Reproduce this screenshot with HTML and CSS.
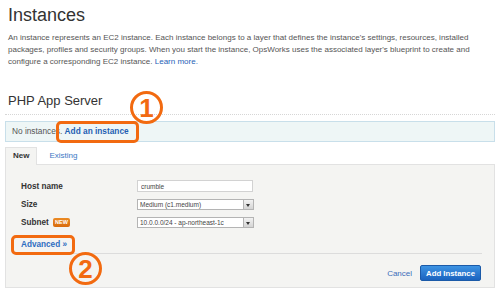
FILE: index.html
```html
<!DOCTYPE html>
<html lang="en">
<head>
  <meta charset="UTF-8" />
  <title>Instances</title>
  <link rel="stylesheet" href="styles.css">
</head>
<body>
  <div class="page">
    <h1>Instances</h1>
    <p class="intro">An instance represents an EC2 instance. Each instance belongs to a layer that defines the instance's settings, resources, installed packages, profiles and security groups. When you start the instance, OpsWorks uses the associated layer's blueprint to create and configure a corresponding EC2 instance. <a href="#">Learn more.</a></p>

    <h2 class="layer-title">PHP App Server</h2>

    <div class="notice">No instances. <a href="#" class="add-link marked">Add an instance</a></div>

    <div class="tabs">
      <span class="tab active">New</span>
      <span class="tab">Existing</span>
    </div>

    <div class="panel">
      <div class="form">
        <div class="row">
          <label>Host name</label>
          <input class="field" type="text" value="crumble">
        </div>
        <div class="row">
          <label>Size</label>
          <div class="select"><span>Medium (c1.medium)</span><span class="arrow"></span></div>
        </div>
        <div class="row">
          <label>Subnet <span class="badge">NEW</span></label>
          <div class="select"><span>10.0.0.0/24 - ap-northeast-1c</span><span class="arrow"></span></div>
        </div>
        <div class="advanced-row">
          <a href="#" class="advanced marked">Advanced &raquo;</a>
        </div>
      </div>
      <div class="actions">
        <a href="#" class="cancel">Cancel</a>
        <button class="btn-primary">Add Instance</button>
      </div>
    </div>

    <!-- callout numbers -->
    <span class="step step-1">1</span>
    <span class="step step-2">2</span>
  </div>
</body>
</html>
```

FILE: styles.css
```css
body {
  margin: 0;
  padding: 0;
  background: #fff;
  font-family: "Liberation Sans", Arial, sans-serif;
  color: #444;
}

a {
  color: #1f62b7;
  text-decoration: none;
}

.page {
  position: relative;
  padding: 0 5px;
}

h1 {
  margin: 0;
  padding: 4px 3px 0;
  font-size: 18px;
  line-height: 22px;
  font-weight: normal;
  color: #333;
}

.intro {
  margin: 6px 0 0;
  padding: 0 3px;
  font-size: 8px;
  line-height: 12px;
  color: #555;
}

.layer-title {
  margin: 25px 0 0;
  padding: 0 3px 5px;
  font-size: 13px;
  line-height: 16px;
  font-weight: normal;
  color: #333;
  border-bottom: 1px dotted #d6d6d6;
}

.notice {
  margin-top: 6px;
  padding: 0 6px;
  height: 19px;
  line-height: 19px;
  font-size: 8.3px;
  color: #555;
  background: #eef6f6;
  border: 1px solid #c8dfea;
}

.add-link {
  font-weight: bold;
  color: #1f5fb3;
}

/* orange annotation frames */
.marked {
  position: relative;
  display: inline-block;
}

.marked::after {
  content: "";
  position: absolute;
  border: 3px solid #f26a10;
  border-radius: 5px;
  pointer-events: none;
}

.add-link::after {
  left: -9px;
  right: -10px;
  top: -1px;
  bottom: -2px;
}

.tabs {
  display: flex;
  margin-top: 5px;
  font-size: 8px;
  line-height: 16px;
}

.tab {
  padding: 0 11px;
  color: #3b78c4;
  border: 1px solid transparent;
  border-bottom: none;
}

.tab.active {
  position: relative;
  z-index: 1;
  padding: 0 7px 1px;
  font-weight: bold;
  color: #333;
  background: #f4f4f2;
  border-color: #e2e2e2;
  margin-bottom: -1px;
}

.panel {
  background: #f4f4f2;
  border: 1px solid #e2e2e2;
  height: 122px;
}

.form {
  margin: 0 12px;
  padding: 12px 0 2px;
  border-bottom: 1px solid #dcdcdc;
}

.row {
  display: flex;
  align-items: center;
  height: 18px;
}

.row label {
  width: 116px;
  padding-left: 3px;
  font-size: 8.2px;
  font-weight: bold;
  color: #333;
}

.badge {
  display: inline-block;
  margin-left: 2px;
  padding: 0 2px;
  height: 9px;
  line-height: 9px;
  font-size: 5.5px;
  color: #fff;
  background: linear-gradient(#eb8a24, #d86a0c);
  border-radius: 2px;
  vertical-align: 1px;
}

.field {
  box-sizing: border-box;
  width: 116px;
  height: 12px;
  margin: 0;
  padding: 0 3px;
  font-family: inherit;
  font-size: 6.5px;
  color: #444;
  background: #fff;
  border: 1px solid #d2d2d2;
  outline: none;
}

.select {
  box-sizing: border-box;
  display: flex;
  align-items: center;
  justify-content: space-between;
  width: 117px;
  height: 11px;
  padding-left: 2px;
  font-size: 6.5px;
  color: #444;
  background: #fff;
  border: 1px solid #b4b4b4;
}

.arrow {
  position: relative;
  width: 9px;
  height: 9px;
  background: linear-gradient(#f2f2f2, #d4d4d4);
  border-left: 1px solid #b4b4b4;
}

.arrow::before {
  content: "";
  position: absolute;
  left: 2px;
  top: 4px;
  border-left: 2.5px solid transparent;
  border-right: 2.5px solid transparent;
  border-top: 3px solid #333;
}

.advanced-row {
  height: 18px;
  line-height: 18px;
  margin-top: 2px;
  padding-left: 3px;
}

.advanced {
  font-size: 8.2px;
  font-weight: bold;
  color: #2d6cc0;
}

.advanced::after {
  left: -10px;
  right: -8px;
  top: -1px;
  bottom: -1px;
}

.actions {
  display: flex;
  justify-content: flex-end;
  align-items: center;
  gap: 8px;
  padding: 11px 13px 0;
}

.cancel {
  font-size: 8px;
  color: #3b6dba;
}

.btn-primary {
  height: 16px;
  padding: 0 5px;
  font-family: inherit;
  font-size: 7.8px;
  font-weight: bold;
  color: #fff;
  background: linear-gradient(#3d93e3, #1b63bf);
  border: 1px solid #1b5aa8;
  border-radius: 2px;
}

.step {
  position: absolute;
  box-sizing: border-box;
  width: 33px;
  height: 33px;
  border: 3px solid #f26a10;
  border-radius: 50%;
  color: #f26a10;
  font-size: 26px;
  font-weight: bold;
  line-height: 28px;
  text-align: center;
}

.step-1 {
  left: 130px;
  top: 91px;
}

.step-2 {
  left: 69px;
  top: 252px;
}
```
